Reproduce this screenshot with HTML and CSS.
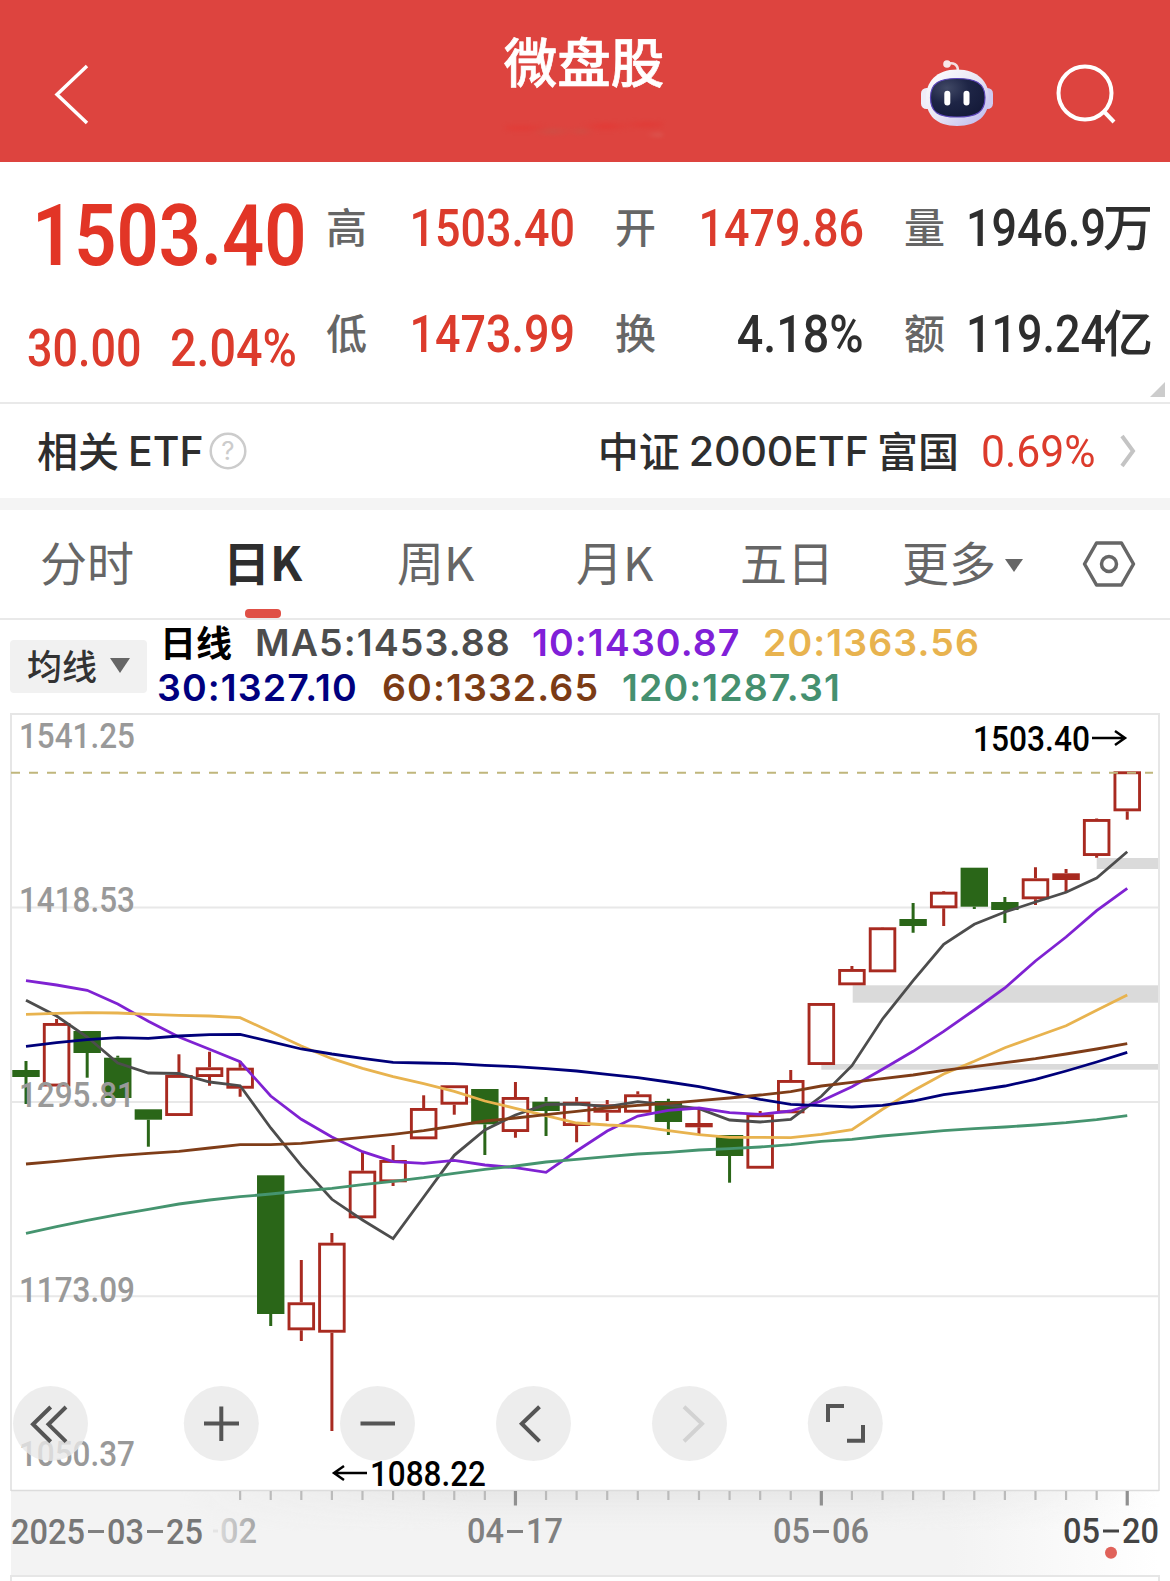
FILE: index.html
```html
<!DOCTYPE html>
<html lang="zh-CN">
<head>
<meta charset="utf-8">
<title>微盘股</title>
<link rel="stylesheet" href="styles.css">
</head>
<body>
<header class="topbar">
  <svg class="back" width="40" height="64" viewBox="0 0 40 64"><path d="M35 4 5 32.500 35 61" /></svg>
  <div class="titles">
    <h1>微盘股</h1>
    <div class="smudge"></div>
  </div>
  <svg class="robot" width="76" height="70" viewBox="918 58 76 70">
    <defs>
      <linearGradient id="shell" x1="0" y1="0" x2="1" y2="1"><stop offset="0" stop-color="#fff"/><stop offset=".5" stop-color="#e9e6f4"/><stop offset="1" stop-color="#b9b5ee"/></linearGradient>
      <radialGradient id="visor" cx=".3" cy=".25" r=".8"><stop offset="0" stop-color="#414966"/><stop offset=".5" stop-color="#1e2546"/><stop offset="1" stop-color="#151b3a"/></radialGradient>
    </defs>
    <path d="M947 64C953 62 958 64 958 71" fill="none" stroke="#f3dfe2" stroke-width="2.600"/>
    <circle cx="947" cy="64" r="3.800" fill="#f8e9ea"/>
    <rect x="921" y="88" width="12" height="21" rx="5.500" fill="#efedf8"/>
    <rect x="981" y="88" width="12" height="21" rx="5.500" fill="#cfcaf0"/>
    <path d="M957 69.500C978 69.500 989 82 989 98 989 115 978 126 957 126 936 126 926 115 926 98 926 82 936 69.500 957 69.500Z" fill="url(#shell)"/>
    <path d="M957 78.500C975 78.500 985 83 985 97.500 985 112 977 117 957 117 938 117 930.500 112 930.500 97.500 930.500 83 940 78.500 957 78.500Z" fill="url(#visor)" stroke="#5a44b8" stroke-width="1.200"/>
    <rect x="944.300" y="90.700" width="6" height="14.800" rx="3" fill="#fff"/>
    <rect x="963.500" y="90.700" width="6" height="14.800" rx="3" fill="#fff"/>
  </svg>
  <svg class="search" width="64" height="64" viewBox="1054 62 64 64"><circle cx="1085" cy="93" r="26.500"/><path d="M1103.500 111 1114 122"/></svg>
</header>

<section class="quote">
  <div class="last">
    <div class="price"><span class="num">1503.40</span></div>
    <div class="change"><span class="num diff">30.00</span><span class="num percent">2.04%</span></div>
  </div>
  <div class="stats">
    <span class="label">高</span><span class="value up"><span class="num">1503.40</span></span>
    <span class="label">开</span><span class="value up"><span class="num">1479.86</span></span>
    <span class="label">量</span><span class="total"><span class="num">1946.9</span><span class="unit">万</span></span>
    <span class="label">低</span><span class="value up"><span class="num">1473.99</span></span>
    <span class="label">换</span><span class="value"><span class="num percent">4.18%</span></span>
    <span class="label">额</span><span class="total"><span class="num">119.24</span><span class="unit">亿</span></span>
  </div>
  <i class="corner"></i>
</section>

<section class="etf">
  <div class="etf-name"><span>相关</span><span class="latin">ETF</span>
    <svg width="38" height="38" viewBox="0 0 38 38"><circle cx="19" cy="19" r="17.300"/><text x="19" y="28">?</text></svg>
  </div>
  <div class="etf-link"><span>中证</span><span class="latin">2000ETF</span><span>富国</span><span class="pct"><span class="num">0.69%</span></span>
    <svg width="18" height="34" viewBox="0 0 18 34"><path d="M3 2 14 17 3 32"/></svg>
  </div>
</section>

<nav class="tabs">
  <a class="t1">分时</a><a class="t2 active">日K</a><a class="t3">周K</a><a class="t4">月K</a><a class="t5">五日</a><a class="t6">更多<i></i></a>
  <svg class="gear" width="56" height="50" viewBox="0 0 56 50"><path d="M15.500 4H40.500L52.500 25 40.500 46H15.500L3.500 25Z"/><circle cx="28" cy="25" r="7.500"/></svg>
</nav>

<section class="legend">
  <button class="picker">均线<i></i></button>
  <div class="rows">
    <div class="row"><b>日线</b><span class="ma5">MA5:1453.88</span><span class="ma10">10:1430.87</span><span class="ma20">20:1363.56</span></div>
    <div class="row"><span class="ma30">30:1327.10</span><span class="ma60">60:1332.65</span><span class="ma120">120:1287.31</span></div>
  </div>
</section>

<section class="chart">
  <svg id="kline" width="1170" height="868" viewBox="0 713 1170 868"></svg>
</section>
<script src="chart.js"></script>
</body>
</html>
```
FILE: styles.css
```css
* { box-sizing: border-box; }
body { margin: 0; width: 1170px; height: 1581px; overflow: hidden; background: #fff; color: #2e2e2e; font-family: Roboto, "Noto Sans CJK SC", sans-serif; }
.num { display: inline-block; font-family: Roboto, sans-serif; font-weight: 500; transform: scaleX(.88); transform-origin: left center; white-space: nowrap; }
.num.percent { transform: scaleX(.915); }

.topbar { height: 162px; background: #dd443f; display: flex; align-items: flex-start; }
.back { margin: 62px 0 0 52px; }
.back path { fill: none; stroke: #fff; stroke-width: 3.5; }
.titles { width: 180px; margin-left: 402px; padding-top: 22px; text-align: center; }
h1 { margin: 0; font: 500 53.500px/76px "Noto Sans CJK SC", sans-serif; color: #fff; -webkit-text-stroke: .7px #fff; }
.smudge { width: 158px; height: 34px; margin: 13px auto 0; opacity: .55; filter: blur(2px); background: radial-gradient(ellipse at 10% 50%, #e8302c 0, transparent 16%), radial-gradient(ellipse at 30% 60%, #bd5a4c 0, transparent 14%), radial-gradient(ellipse at 48% 60%, #c0584a 0, transparent 12%), radial-gradient(ellipse at 64% 45%, #e92f2b 0, transparent 18%), radial-gradient(ellipse at 90% 40%, #e5302c 0, transparent 14%), radial-gradient(ellipse at 97% 70%, #d98078 0, transparent 6%); }
.robot { margin: 58px 0 0 244px; }
.search { margin: 62px 0 0 60px; }
.search circle, .search path { fill: none; stroke: #fff; stroke-width: 4; }

.quote { position: relative; height: 242px; border-bottom: 2px solid #e9e9e9; display: flex; }
.last { width: 326px; color: #e23526; }
.price { padding: 24px 0 0 32px; font-size: 86px; line-height: 100px; }
.price .num { font-weight: 600; transform: scaleX(.86); }
.change { display: flex; padding: 33px 0 0 27px; font-size: 51px; line-height: 60px; color: #dc3b2c; }
.diff { width: 143px; flex: none; }
.stats { display: grid; grid-template-columns: 40px 209px 40px 40px 209px 40px 40px 22px 190px; grid-template-rows: 105.500px 105.500px; margin-top: 14px; font-size: 51px; line-height: 105.500px; }
.label { font: 500 41px/99px "Noto Sans CJK SC", sans-serif; color: #666; }
.label:nth-child(6n+1) { grid-column: 1; }
.label:nth-child(6n+3) { grid-column: 4; }
.label:nth-child(6n+5) { grid-column: 7; }
.value { text-align: right; }
.value .num { transform-origin: right center; }
.up { color: #dc3b2c; }
.total { grid-column: 9; display: flex; }
.total .num { width: 137px; }
.unit { font: 500 50px/97px "Noto Sans CJK SC", sans-serif; }
.corner { position: absolute; right: 5px; bottom: 5px; border-left: 15px solid transparent; border-bottom: 15px solid #ccc; }

.etf { height: 94px; display: flex; justify-content: space-between; align-items: center; padding: 0 33px 0 37px; font: 500 41px/60px "Noto Sans CJK SC", sans-serif; }
.etf-name, .etf-link { display: flex; align-items: center; }
.etf-name > span, .etf-link > span { margin-bottom: 4px; }
.etf span.latin { font-family: Inter, sans-serif; font-size: 41px; margin: 0 8px 1px 9px; }
.etf-name svg { margin-left: -3px; }
.etf-name circle { fill: none; stroke: #ccc; stroke-width: 2.500; }
.etf-name text { font: 400 26px Inter, sans-serif; fill: #ccc; text-anchor: middle; }
.etf-link .pct { width: 116px; margin: 0 22px 3px 22px; color: #dc3b2c; font-size: 44px; }
.pct .num { font-weight: 400; transform: scaleX(.97); }
.etf-link path { fill: none; stroke: #c4c4c4; stroke-width: 4; }

.tabs { position: relative; height: 122px; border-top: 12px solid #f4f4f4; border-bottom: 2px solid #e9e9e9; display: flex; font: 400 47px/101px "Noto Sans CJK SC", sans-serif; color: #666; }
.tabs a { flex: none; white-space: nowrap; height: 108px; }
.t1 { width: 185px; padding-left: 40px; }
.t2 { width: 170px; padding-left: 38px; }
.t3 { width: 179px; padding-left: 42px; }
.t4 { width: 164px; padding-left: 42px; }
.t5 { width: 162px; padding-left: 42px; }
.t6 { width: 221px; padding-left: 42px; }
.t6 i { display: inline-block; margin: 0 0 9px 9px; border: 9px solid transparent; border-top: 13px solid #666; border-bottom: 0; }
.active { position: relative; color: #2e2e2e; font-weight: 700; }
.active::after { content: ""; position: absolute; left: 60px; bottom: 0; width: 36px; height: 9px; border-radius: 4px; background: #e05046; }
.gear { margin-top: 29px; }
.gear path, .gear circle { fill: none; stroke: #666; stroke-width: 3.500; stroke-linejoin: round; }

.legend { height: 93px; display: flex; align-items: flex-start; }
.picker { width: 137px; height: 53px; margin: 20px 0 0 10px; padding: 0 0 3px 17px; border: 0; border-radius: 4px; background: #f1f1f1; display: flex; align-items: center; font: 500 35px/50px "Noto Sans CJK SC", sans-serif; color: #333; }
.picker i { margin-left: 13px; border: 10.500px solid transparent; border-top: 15px solid #666; border-bottom: 0; }
.rows { padding-left: 11px; }
.row { display: flex; height: 45px; font: 600 37.500px/45px Inter, sans-serif; letter-spacing: 1.100px; white-space: nowrap; }
.row b { width: 97px; padding-left: 2px; font: 700 36px/42px "Noto Sans CJK SC", sans-serif; letter-spacing: 0; color: #000; }
.ma5 { width: 277px; color: #4d4d4d; }
.ma10 { width: 231px; color: #8020d8; }
.ma20 { color: #e8b34f; }
.ma30 { width: 225px; margin-left: -1px; color: #00007f; }
.ma60 { width: 240px; color: #7b3b15; }
.ma120 { color: #45906f; }

.chart { height: 868px; }
.chart svg { display: block; font: 500 35px Roboto, sans-serif; }
```
FILE: chart.js
```javascript
const svg = document.getElementById('kline');
const X0 = 26, STEP = 30.59;
const cx = i => X0 + i * STEP;
let out = '';

out += `<defs>
<linearGradient id="axisFade" x1="0" x2="1"><stop offset="0" stop-color="#f3f3f3"/><stop offset=".82" stop-color="#f3f3f3"/><stop offset="1" stop-color="#fff"/></linearGradient>
<linearGradient id="axisShade" x1="0" y1="0" x2="0" y2="1"><stop offset="0" stop-color="#e4e4e4" stop-opacity=".8"/><stop offset="1" stop-color="#eee" stop-opacity="0"/></linearGradient>
<linearGradient id="shadeEnds" x1="0" x2="1"><stop offset="0" stop-color="#000"/><stop offset=".3" stop-color="#fff"/><stop offset=".7" stop-color="#fff"/><stop offset="1" stop-color="#000"/></linearGradient>
<mask id="ends"><rect x="180" y="1490" width="979" height="50" fill="url(#shadeEnds)"/></mask>
<linearGradient id="dayFade" gradientUnits="userSpaceOnUse" x1="212" x2="258" y1="0" y2="0"><stop offset="0" stop-color="#e4e4e4"/><stop offset="1" stop-color="#a2a2a2"/></linearGradient>
</defs>`;

// frame, axis strip and grid
out += `<rect x="11" y="1491" width="1148" height="84" fill="url(#axisFade)"/>
<rect x="180" y="1491" width="979" height="42" fill="url(#axisShade)" mask="url(#ends)"/>
<path d="M11 1491V714H1159V1491M11 1581V1576H1159V1581" fill="none" stroke="#e6e6e6" stroke-width="2"/>
<path d="M11 1490.500H1159" stroke="#dcdcdc" stroke-width="1.300"/>
<path d="M12 907.500H1158M12 1102H1158M12 1296.300H1158" stroke="#e8e8e8" stroke-width="2"/>`;

// price gaps
[[1096.7, 858, 11], [852.7, 985.3, 17.4], [821.3, 1064, 5.7]].forEach(([x, y, h]) => {
  out += `<rect x="${x}" y="${y}" width="${1158 - x}" height="${h}" fill="#dadada"/>`;
});

// [rising, high, body top, body bottom, low]
const candles = [
  [0,1061,1070,1077,1104],[1,1019,1023,1086.5,1086],[0,1031,1031,1053,1077.7],[0,1055.7,1057.7,1098,1098],
  [0,1110,1109.3,1119.7,1146.7],[1,1054.3,1075,1116,1116],[1,1051.7,1067.3,1077,1085.7],[1,1061,1067.7,1088.7,1096.7],
  [0,1176,1175.3,1314,1326],[1,1260,1302.3,1330.3,1341],[1,1233,1242.7,1332.7,1431],[1,1151.7,1170.7,1218.3,1218],
  [1,1145,1160,1182.3,1186],[1,1095.3,1108,1139.3,1139],[1,1086,1085.3,1104.7,1114.7],[0,1090,1089,1124.3,1155],
  [1,1082,1097,1132,1137.7],[0,1097,1101.7,1111,1136],[1,1097,1101.7,1126,1142.3],[1,1100,1104.3,1112.7,1121],
  [1,1091.3,1094.3,1112.7,1112],[0,1098.7,1101,1122,1135],[1,1108,1123,1127.3,1134],[0,1136,1135,1156,1182.7],
  [1,1111,1114.3,1168.7,1168],[1,1070,1080,1113.3,1113],[1,1004,1003,1065,1064],[1,966,969,985.3,985],
  [1,927,927.3,972.3,972],[0,903,919,926,932.7],[1,891,891.7,908.3,926],[0,868,867.7,906.7,909],
  [0,897,902,910,923],[1,867.3,878.3,899.3,905],[1,869,873.3,880,892.3],[1,818.5,819,856,857.7],
  [1,772,771.3,811.3,819.7]
];
candles.forEach(([up, hi, top, bot, lo], i) => {
  const x = cx(i), c = up ? '#a82a20' : '#2a6618';
  out += `<path d="M${x} ${hi}V${Math.max(hi, top)}M${x} ${bot}V${Math.max(lo, bot)}" stroke="${c}" stroke-width="3"/>`;
  out += up
    ? `<rect x="${x - 12.3}" y="${top + 1.45}" width="24.600" height="${bot - top - 2.9}" fill="${bot - top < 8 ? c : 'none'}" stroke="${c}" stroke-width="2.900"/>`
    : `<rect x="${x - 13.7}" y="${top}" width="27.400" height="${bot - top}" fill="${c}"/>`;
});

// moving averages
const averages = {
  '#4d4d4d': [1000.3,1016,1037,1063,1073,1073.5,1082,1085.7,1128,1165.7,1199.3,1220,1238.7,1197,1155.3,1130,1115,1104.5,1104,1106.7,1101.7,1105,1108.7,1120,1122,1119.3,1096.3,1065.7,1019,980.7,944.3,924.3,912,902,892.3,878,851.7],
  '#7f22d2': [980.7,985,990.3,1004,1021.3,1037,1049.3,1061.7,1096,1119.3,1137,1151.7,1161.7,1163.3,1160.3,1165,1167.7,1172.3,1151,1131,1116,1110.3,1108,1112.7,1114.3,1111,1101,1086.7,1069.3,1051.3,1031.3,1010,988,961,937,910.7,888.3],
  '#e8b34f': [1014.3,1013.3,1012.7,1013,1014.3,1015.3,1016,1017.7,1031.7,1046,1058.7,1068.3,1076.7,1083.7,1091.3,1101,1108.3,1115.7,1123,1125,1126.3,1130.7,1134.7,1137.3,1137.3,1137.7,1134.3,1129.7,1109.3,1090.7,1074,1061.3,1047.7,1036.7,1025.7,1010.3,995],
  '#00007a': [1046.3,1042.7,1039.7,1037.7,1038.3,1036,1034.7,1034.3,1041.7,1049,1054,1058.3,1062.3,1063,1063.7,1065.3,1066.7,1068.7,1071,1074.3,1077.7,1082,1086.7,1092.7,1099.3,1104.3,1105.7,1107,1105.3,1101,1094.7,1090.7,1086,1079.3,1071,1062,1052.3],
  '#7f3d18': [1164,1161.3,1158.3,1155.7,1153.3,1151.3,1148,1144.7,1144.7,1143.3,1140.3,1137.3,1134.3,1130.7,1126,1121,1118,1114.7,1111.3,1108,1105.3,1103.3,1100.7,1098,1095,1091.7,1086,1082.3,1078.7,1075,1070.3,1066.7,1062.7,1058.7,1054,1049,1043.7],
  '#45946f': [1233.3,1226.7,1220.3,1214.7,1209.3,1204,1200,1196.7,1194,1191,1188.3,1184.7,1181.3,1177.7,1173.3,1169.3,1166,1162,1159.3,1156.7,1154,1152.3,1150,1148.7,1147,1144.7,1141.3,1139.3,1136,1133.3,1130.7,1128.7,1127,1125,1122.7,1119.7,1115.7]
};
for (const [color, ys] of Object.entries(averages)) {
  out += `<polyline points="${ys.map((y, i) => cx(i) + ',' + y).join(' ')}" fill="none" stroke="${color}" stroke-width="2.800"/>`;
}
out += '<path d="M11 772.700H1153" stroke="#c0b67c" stroke-width="2" stroke-dasharray="9 9"/>';

// ticks
for (let i = 7; i < 37; i++) {
  const major = i === 16 || i === 26 || i === 36;
  out += `<path d="M${cx(i)} 1491V${major ? 1505.5 : 1500}" stroke="${major ? '#909090' : '#bbb'}" stroke-width="${major ? 3.2 : 2.2}"/>`;
}

const label = (s, x, y, w, fill) => {
  out += `<text x="${x}" y="${y}" textLength="${w}" lengthAdjust="spacingAndGlyphs" fill="${fill}">${s}</text>`;
};
label('1541.25', 19, 748, 116, '#999');
label('1418.53', 19, 912.3, 116, '#999');
label('1295.81', 19, 1106.7, 116, '#999');
label('1173.09', 19, 1301.8, 116, '#999');
label('1050.37', 19, 1465.9, 116, '#999');
label('1503.40', 973, 751, 117, '#000');
label('1088.22', 370, 1485.8, 116, '#000');
label('2025', 11, 1543.7, 74, '#777');
label('03', 107, 1543.7, 37, '#777');
label('25', 166, 1543.7, 37, '#777');
label('02', 220, 1543, 37, 'url(#dayFade)');
label('04', 467, 1542.7, 37, '#808080');
label('17', 526, 1542.7, 37, '#808080');
label('05', 773, 1542.7, 37, '#808080');
label('06', 832, 1542.7, 37, '#808080');
label('05', 1063, 1542.7, 37, '#444');
label('20', 1122, 1542.7, 37, '#444');
out += `<path d="M88 1531.500H104M147 1531.500H163M507 1531.500H523M813 1531.500H829" stroke="#808080" stroke-width="3"/>
<path d="M213 1531H218" stroke="#e4e4e4" stroke-width="3"/><path d="M1103 1531H1119" stroke="#444" stroke-width="3"/>
<circle cx="1111" cy="1552.700" r="6" fill="#e0625a"/>
<path d="M1092 738H1125M1115 731 1125 738 1115 745M367 1473H334M344 1466 334 1473 344 1480" fill="none" stroke="#000" stroke-width="2.500"/>`;

// zoom and pan controls
const controls = [
  [50.5, 'M50.700 1407 33 1424.300 50.700 1441.700M66 1407 48.500 1424.300 66 1441.700'],
  [221.3, 'M204 1423.500H239M221.300 1406.500V1441'],
  [377.5, 'M360.500 1423.500H395'],
  [533.5, 'M539.500 1406.700 521.800 1423.700 539.500 1441.300'],
  [689.5, 'M684 1406.700 702 1423.700 684 1441.300', '#d2d2d2'],
  [845.3, 'M828 1422V1406H844M847 1440.700H863V1425']
];
controls.forEach(([x, d, color = '#555']) => {
  out += `<g><circle cx="${x}" cy="1423.500" r="37.500" fill="#e8e8e8" fill-opacity=".8"/><path d="${d}" fill="none" stroke="${color}" stroke-width="4"/></g>`;
});
svg.innerHTML = out;
```
